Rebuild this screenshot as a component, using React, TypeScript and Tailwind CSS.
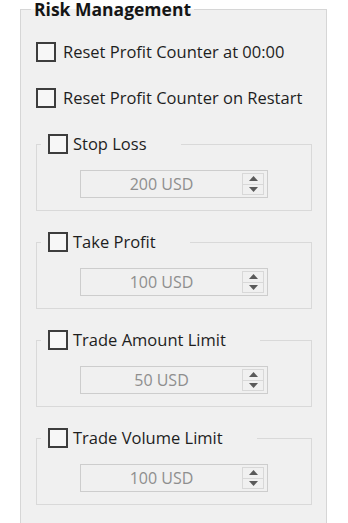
const groups = [
  { title: "Stop Loss", value: "200 USD" },
  { title: "Take Profit", value: "100 USD" },
  { title: "Trade Amount Limit", value: "50 USD" },
  { title: "Trade Volume Limit", value: "100 USD" },
];

function Check() {
  return <span className="block h-[20px] w-[20px] shrink-0 border-2 border-[#3d3d3d] bg-[#f7f7f7]" />;
}

function Spinner({ value }: { value: string }) {
  return (
    <div className="ml-[43px] mt-[16px] flex h-[28px] w-[188px] border border-[#cdcdcd] bg-[#f0f0f0]">
      <div className="flex flex-1 items-center justify-center text-[16px] text-[#8e8e8e]">{value}</div>
      <div className="my-[2px] mr-[3px] flex w-[22px] flex-col border border-[#d8d8d8]">
        <div className="flex flex-1 items-center justify-center border-b border-[#d8d8d8]">
          <svg width="9" height="5" viewBox="0 0 9 5"><path d="M4.5 0 L9 5 L0 5 Z" fill="#5a5a5a" /></svg>
        </div>
        <div className="flex flex-1 items-center justify-center">
          <svg width="9" height="5" viewBox="0 0 9 5"><path d="M0 0 L9 0 L4.5 5 Z" fill="#5a5a5a" /></svg>
        </div>
      </div>
    </div>
  );
}

export default function App() {
  return (
    <div className="h-[523px] w-[348px] overflow-hidden bg-white pl-[20px] pt-[1px] font-['Open_Sans',sans-serif] text-[16.5px] text-[#1e1e1e]">
      <fieldset className="h-[560px] w-[307px] border border-[#d6d6d6] bg-[#f0f0f0]">
        <legend className="ml-[10px] px-[3px] text-[17.5px] font-bold leading-[16px] text-[#151515]">Risk Management</legend>

        <div className="pl-[15px] pr-[14px]">
          <div className="mt-[25px] flex flex-col gap-[26px]">
            <label className="flex h-[20px] items-center gap-[7px]">
              <Check />
              <span>Reset Profit Counter at 00:00</span>
            </label>
            <label className="flex h-[20px] items-center gap-[7px]">
              <Check />
              <span>Reset Profit Counter on Restart</span>
            </label>
          </div>

          <div className="mt-[26px] flex flex-col gap-[21px]">
            {groups.map((g) => (
              <fieldset key={g.title} className="border border-[#d9d9d9] pb-[12px]">
                <legend className="ml-[4px] pl-[7px] pr-[34px]">
                  <span className="flex h-[20px] items-center gap-[5px]">
                    <Check />
                    <span>{g.title}</span>
                  </span>
                </legend>
                <Spinner value={g.value} />
              </fieldset>
            ))}
          </div>
        </div>
      </fieldset>
    </div>
  );
}
